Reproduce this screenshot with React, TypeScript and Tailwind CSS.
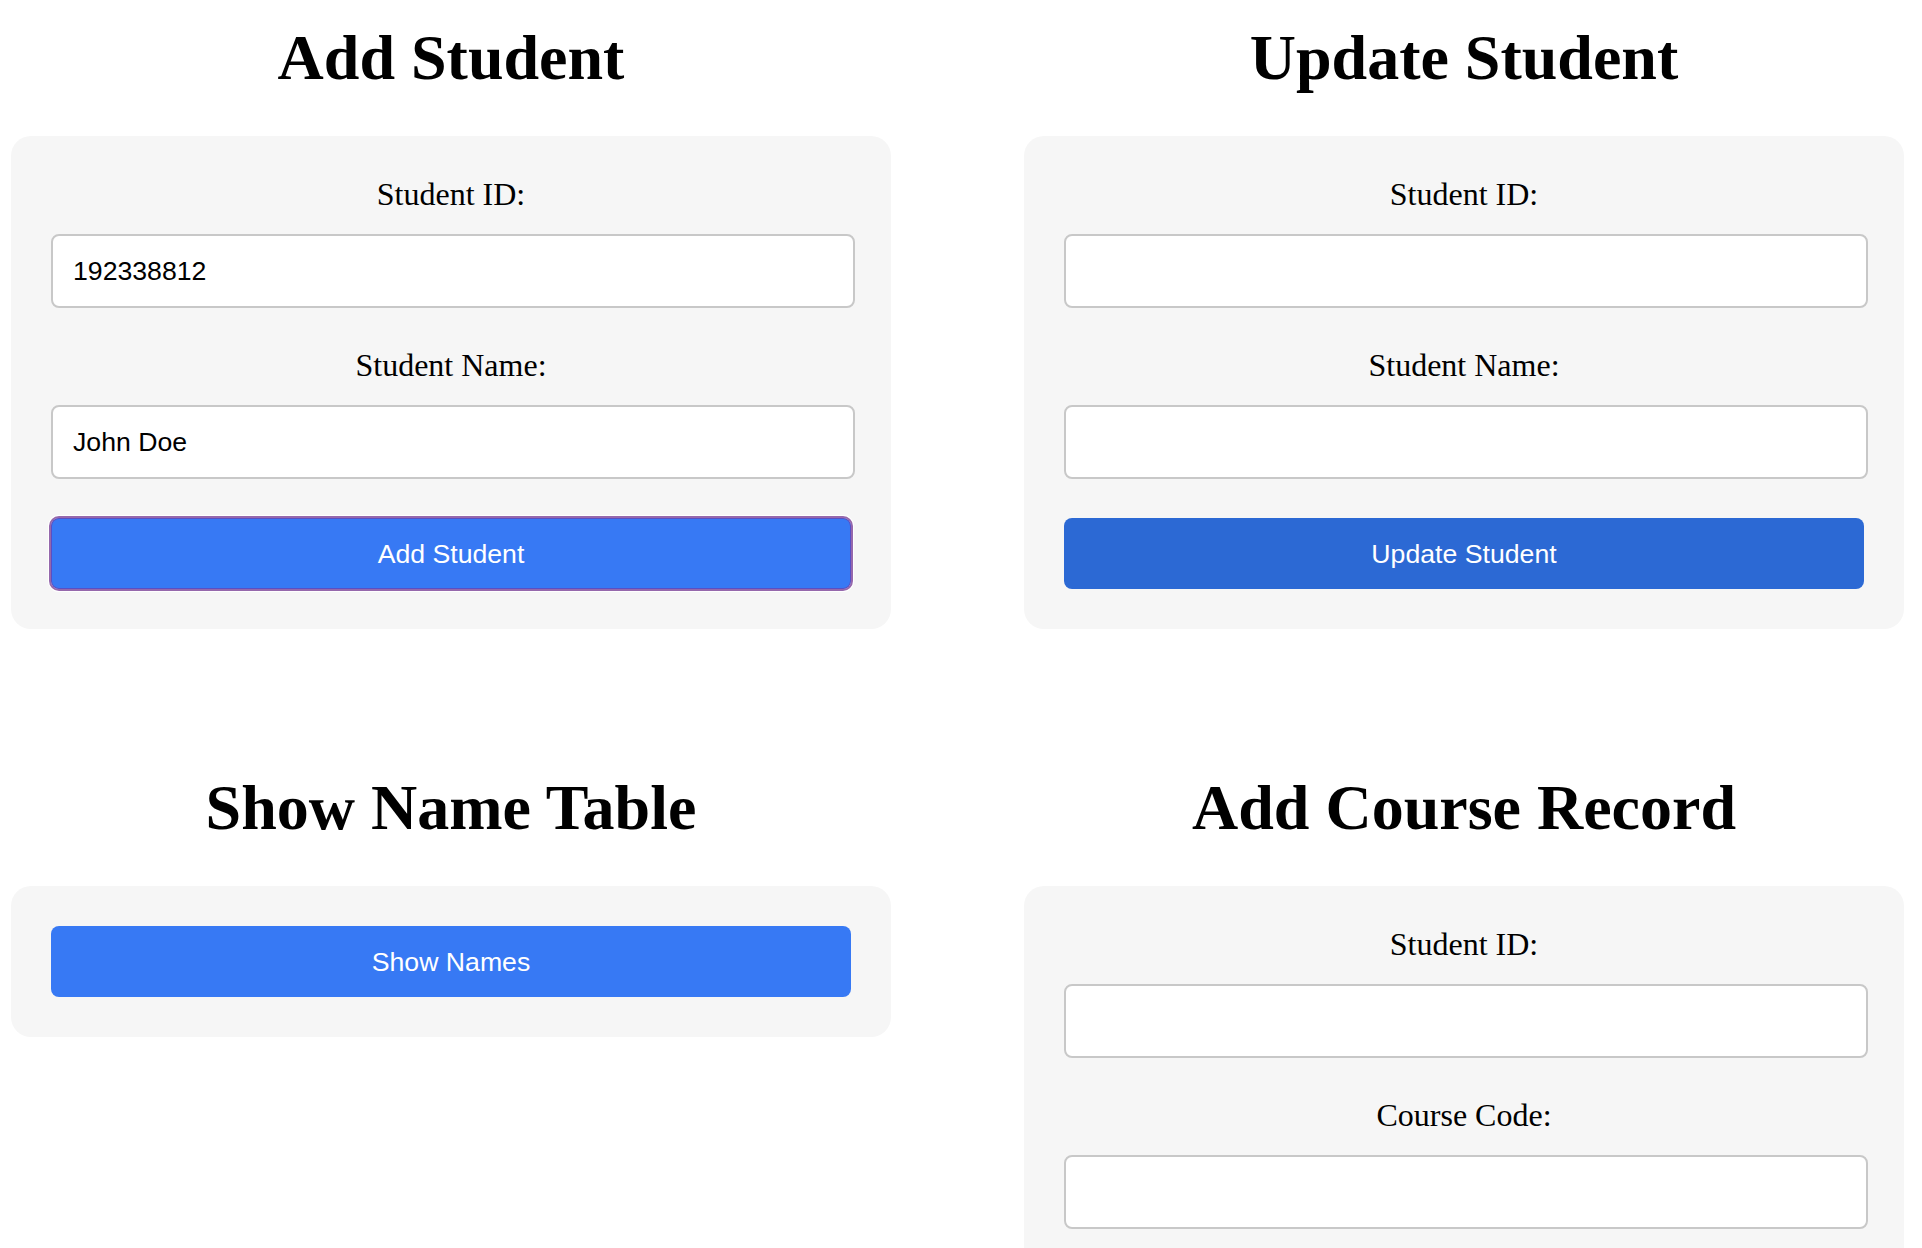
import React from "react";

const serif = "font-['Liberation_Serif','Times_New_Roman',serif]";
const sans = "font-['Liberation_Sans',Arial,sans-serif]";

function Field({ label, value }: { label: string; value?: string }) {
  return (
    <div>
      <label className={`block text-center text-[32px] leading-[37px] mb-[21px] text-black ${serif}`}>{label}</label>
      <input
        type="text"
        defaultValue={value}
        className={`block w-[804px] h-[74px] mb-[39px] px-[20px] bg-white border-2 border-[#c8c8c8] rounded-[8px] text-[26.67px] text-black outline-none ${sans}`}
      />
    </div>
  );
}

function Section({ title, children }: { title: string; children: React.ReactNode }) {
  return (
    <section>
      <h1 className={`mt-[21px] mb-[41px] text-center text-[64px] leading-[74px] font-bold text-black ${serif}`}>{title}</h1>
      <div className="bg-[#f6f6f6] rounded-[20px] p-[40px]">{children}</div>
    </section>
  );
}

export default function App() {
  return (
    <div className="h-[1248px] overflow-hidden bg-white">
      <div className="grid grid-cols-[880px_880px] gap-x-[133px] gap-y-[121px] pl-[11px]">
        <Section title="Add Student">
          <Field label="Student ID:" value="192338812" />
          <Field label="Student Name:" value="John Doe" />
          <button
            className={`block w-full h-[71px] rounded-[8px] bg-[#3779f4] text-white text-[26.67px] outline-2 outline-solid outline-[#9668ac] shadow-[0_0_0_3px_#ffffff,inset_0_0_0_1px_#5a4fc4] ${sans}`}
          >
            Add Student
          </button>
        </Section>

        <Section title="Update Student">
          <Field label="Student ID:" />
          <Field label="Student Name:" />
          <button className={`block w-full h-[71px] rounded-[8px] bg-[#2c69d4] text-white text-[26.67px] ${sans}`}>
            Update Student
          </button>
        </Section>

        <Section title="Show Name Table">
          <button className={`block w-full h-[71px] rounded-[8px] bg-[#3779f4] text-white text-[26.67px] ${sans}`}>
            Show Names
          </button>
        </Section>

        <Section title="Add Course Record">
          <Field label="Student ID:" />
          <Field label="Course Code:" />
        </Section>
      </div>
    </div>
  );
}
